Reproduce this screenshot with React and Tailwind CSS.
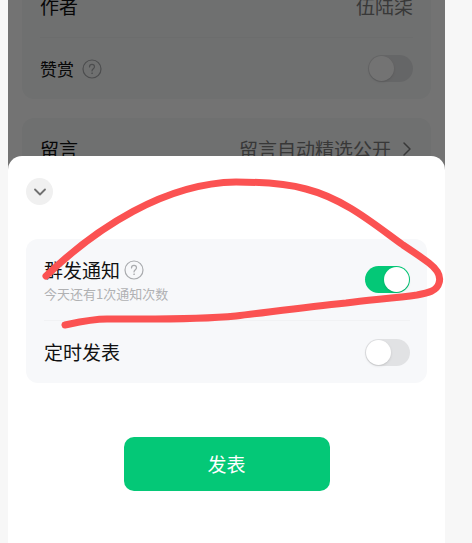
import { useState } from 'react';
import { ChevronDown, ChevronRight } from 'lucide-react';

const Switch = ({ id, checked, onChange }) => (
    <input
        id={id}
        type="checkbox"
        role="switch"
        checked={checked}
        onChange={(e) => onChange(e.target.checked)}
        className="relative h-[27px] w-[45px] shrink-0 appearance-none rounded-full bg-[#e1e2e4] checked:bg-[#04c877] before:absolute before:top-px before:left-px before:size-[25px] before:rounded-full before:bg-white before:shadow-sm checked:before:left-[19px]"
    />
);

const HelpIcon = () => (
    <svg viewBox="0 0 20 20" className="size-5 shrink-0 text-[#a9abae]" fill="none" stroke="currentColor" strokeLinecap="round" strokeLinejoin="round" aria-hidden="true">
        <circle cx="10" cy="10" r="9" strokeWidth="1.2" />
        <path d="M7.5 8C7.5 6.4 8.5 5.4 10 5.4S12.5 6.4 12.5 7.8C12.5 9.6 10 9.8 10 11.9" strokeWidth="1.2" />
        <circle cx="10" cy="14.2" r="0.4" fill="currentColor" strokeWidth="0.7" />
    </svg>
);

const ArticleSettings = () => {
    const [reward, setReward] = useState(false);

    return (
        <section className="relative flex h-[180px] flex-col justify-end gap-[19px] overflow-hidden bg-white px-[14px]">
            <div className="shrink-0 rounded-xl bg-[#f6f8f8] px-[18px]">
                <div className="flex h-[62px] items-center justify-between">
                    <span>作者</span>
                    <span className="text-[#7d7d7d]">伍陆柒</span>
                </div>
                <div className="flex h-[62px] items-center justify-between border-t border-[#f0f1f2]">
                    <label htmlFor="reward" className="flex items-center gap-2 text-[17px]">
                        赞赏
                        <HelpIcon />
                    </label>
                    <Switch id="reward" checked={reward} onChange={setReward} />
                </div>
            </div>
            <div className="shrink-0 rounded-xl bg-[#f6f8f8] px-[18px]">
                <div className="flex h-[62px] items-center justify-between">
                    <span>留言</span>
                    <span className="flex items-center gap-1 text-[#7d7d7d]">
                        留言自动精选公开
                        <ChevronRight className="-mr-[6px] size-6" strokeWidth={1.5} />
                    </span>
                </div>
            </div>
            <div className="absolute inset-0 bg-black/55" />
        </section>
    );
};

const PublishSheet = () => {
    const [notify, setNotify] = useState(true);
    const [scheduled, setScheduled] = useState(false);

    return (
        <section className="relative -mt-6 flex-1 rounded-t-[14px] bg-white px-[18px] pt-[22px] pb-12">
            <button type="button" aria-label="收起" className="flex size-[27px] items-center justify-center rounded-full bg-[#f0f0f0] text-[#707070]">
                <ChevronDown className="size-[20px]" strokeWidth={2.2} />
            </button>

            <div className="mt-[34px] rounded-xl bg-[#f7f8fa] pr-[17px] pl-[18px]">
                <div className="flex h-[81px] items-center justify-between">
                    <div>
                        <label htmlFor="notify" className="flex items-center gap-1 leading-7">
                            群发通知
                            <HelpIcon />
                        </label>
                        <p className="text-[13px] leading-5 text-[#b0b1b3]">今天还有1次通知次数</p>
                    </div>
                    <Switch id="notify" checked={notify} onChange={setNotify} />
                </div>
                <div className="flex h-[63px] items-center justify-between border-t border-[#f1f2f4]">
                    <label htmlFor="scheduled">定时发表</label>
                    <Switch id="scheduled" checked={scheduled} onChange={setScheduled} />
                </div>
            </div>

            <button type="button" className="mx-auto mt-[54px] flex h-[54px] w-[206px] items-center justify-center rounded-[10px] bg-[#04c877] text-white">
                发表
            </button>

            {/* hand-drawn marker around the notification row */}
            <svg viewBox="8 156 437 180" className="pointer-events-none absolute top-0 left-0 w-full" fill="none" stroke="#fb5252" strokeWidth="7" strokeLinecap="round" strokeLinejoin="round" aria-hidden="true">
                <path d="M46 276C96 228 165 183 236 182C258 182 284 183 306 189C345 199 375 225 403 245C412 251 421 257 429 263C438 270 441 277 439 283C437 291 428 293 417 295C395 298 370 300 346 303C306 307 270 312 236 316C195 320 150 319 107 319C92 319 79 322 65 325" />
            </svg>
        </section>
    );
};

const App = () => {
    return (
        <div className="min-h-screen bg-[#f7f7f7] pr-[27px] pl-2 font-['Noto_Sans_CJK_SC',sans-serif] text-[#111111]">
            <main className="flex min-h-screen flex-col text-[19px]">
                <ArticleSettings />
                <PublishSheet />
            </main>
        </div>
    );
};

export default App;
